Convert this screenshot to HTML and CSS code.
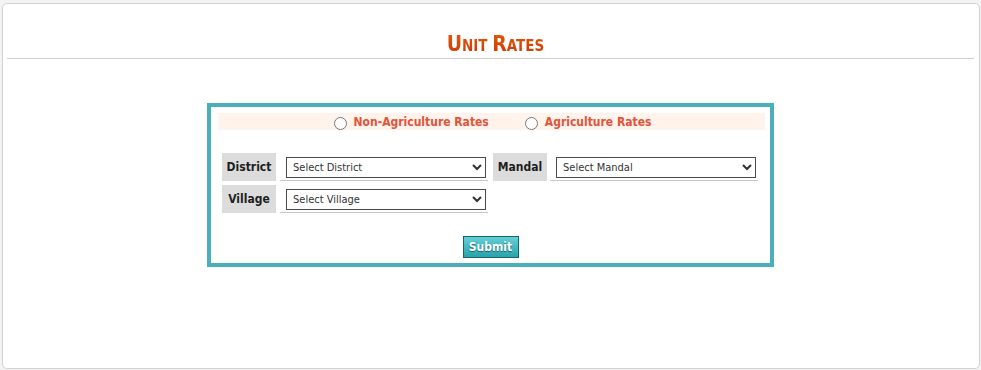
FILE: index.html
```
<!DOCTYPE html>
<html>
<head>
<meta charset="utf-8">
<link rel="stylesheet" href="styles.css">
</head>
<body>
<div class="card">
  <h1 class="title"><span class="big">U</span>nit <span class="big">R</span>ates</h1>
  <div class="rule"></div>
  <div class="formbox">
    <div class="band">
      <label class="opt"><input type="radio" name="rt"><span>Non-Agriculture Rates</span></label>
      <label class="opt"><input type="radio" name="rt"><span>Agriculture Rates</span></label>
    </div>
    <div class="fields">
      <div class="lbl">District</div>
      <div class="cell"><select><option>Select District</option></select></div>
      <div class="lbl">Mandal</div>
      <div class="cell"><select><option>Select Mandal</option></select></div>
      <div class="lbl">Village</div>
      <div class="cell"><select><option>Select Village</option></select></div>
    </div>
    <div class="actions"><button class="submit">Submit</button></div>
  </div>
</div>
</body>
</html>
```
FILE: styles.css
```
html, body { margin: 0; padding: 0; }
body {
  background: #f3f3f3;
  padding: 3px 0 0 2px;
  font-family: "DejaVu Sans Condensed", "DejaVu Sans", sans-serif;
}
.card {
  width: 976px;
  height: 364px;
  background: #fff;
  border: 1px solid #d2d2d2;
  border-radius: 5px;
}
.title {
  margin: 0;
  padding: 28px 0 0 9px;
  height: 24px;
  text-align: center;
  font-family: "DejaVu Sans Condensed", "DejaVu Sans", sans-serif;
  font-size: 15px;
  font-weight: bold;
  text-transform: uppercase;
  letter-spacing: 0;
  background: linear-gradient(#f28a1a, #d23400);
  -webkit-background-clip: text;
  background-clip: text;
  color: transparent;
  line-height: 25px;
}
.title .big { font-size: 21px; }
.rule {
  margin: 2px 5px 0 4px;
  border-top: 1px solid #cfcfcf;
}
.formbox {
  width: 559px;
  height: 156px;
  margin: 44px 0 0 204px;
  border: 4px solid #4aaebb;
}
.band {
  margin: 6px 5px 0 7px;
  height: 17px;
  background: #fff3ec;
  display: flex;
  justify-content: center;
  gap: 36px;
  padding-left: 2px;
}
.opt {
  display: flex;
  align-items: center;
  font-size: 12px;
  font-weight: bold;
  color: #e2533a;
}
.opt input {
  margin: 3px 7px 0 0;
  width: 13px;
  height: 13px;
}
.fields {
  display: grid;
  grid-template-columns: 54px 208px 54px 208px;
  grid-auto-rows: 28px;
  column-gap: 4px;
  row-gap: 4px;
  margin: 23px 0 0 11px;
}
.fields .lbl:nth-child(3) { margin-left: 1px; margin-right: -1px; }
.lbl {
  background: #dcdcdc;
  font-size: 12px;
  font-weight: bold;
  color: #1e1e1e;
  display: flex;
  align-items: center;
  justify-content: center;
}
.cell {
  border-bottom: 1px solid #c8c8c8;
  box-sizing: border-box;
  padding: 3px 0 0 6px;
}
.cell select {
  width: 200px;
  height: 21px;
  border: 1px solid #4a4a4a;
  border-radius: 0;
  background: #fff;
  font-family: "DejaVu Sans Condensed", "DejaVu Sans", sans-serif;
  font-size: 11px;
  color: #333;
  padding: 0 2px;
}
.actions {
  display: flex;
  justify-content: center;
  margin-top: 23px;
}
.submit {
  width: 56px;
  height: 22px;
  padding: 0;
  border: 1px solid #17656c;
  background: linear-gradient(#62cfd6, #2aa3ac);
  color: #fff;
  font-family: "DejaVu Sans Condensed", "DejaVu Sans", sans-serif;
  font-weight: bold;
  font-size: 12px;
  text-shadow: 0 1px 1px #1f5e63;
  border-radius: 0;
}
```
